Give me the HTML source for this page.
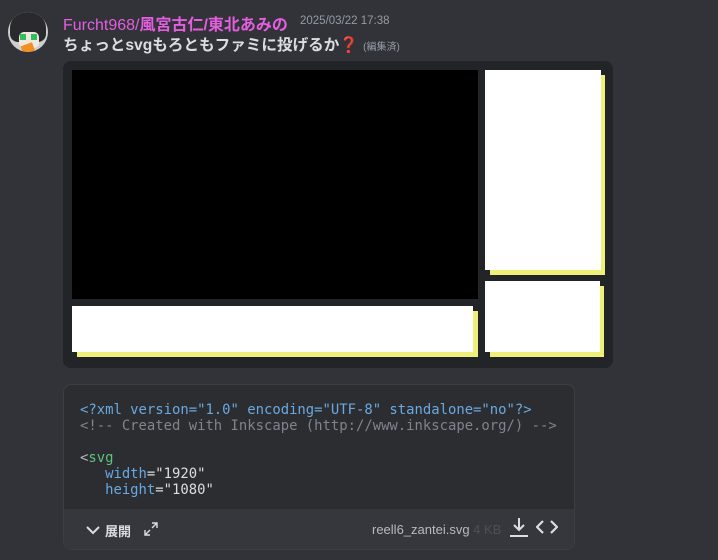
<!DOCTYPE html>
<html><head><meta charset="utf-8"><style>
body{margin:0;width:718px;height:560px;background:#313338;overflow:hidden;position:relative;font-family:"Liberation Sans","Noto Sans CJK JP",sans-serif}
.a{position:absolute}
.mono{font-family:"DejaVu Sans Mono","Liberation Mono",monospace;font-size:13.9px;white-space:pre;line-height:16px}
</style></head><body>
<div class="a" style="left:8px;top:12px;width:40px;height:40px;border-radius:50%;background:#cfcfcf;overflow:hidden">
 <div class="a" style="left:2px;top:0px;width:36px;height:30px;background:#2a2a2e;border-radius:16px 16px 8px 8px"></div>
 <div class="a" style="left:11px;top:20px;width:20px;height:16px;background:#f2e6e0;border-radius:5px"></div>
 <div class="a" style="left:12px;top:22px;width:6px;height:6px;background:#2fc05a"></div>
 <div class="a" style="left:23px;top:22px;width:6px;height:6px;background:#2fc05a"></div>
 <div class="a" style="left:14px;top:32px;width:12px;height:10px;background:#f09020;transform:rotate(-20deg)"></div>
</div>
<div class="a" style="left:63px;top:11px;font-size:16px;color:#e45ee0;white-space:nowrap">Furcht968/<b>風宮古仁/東北あみの</b></div>
<div class="a" style="left:300px;top:15px;font-size:11.5px;color:#949ba4">2025/03/22 17:38</div>
<div class="a" style="left:63px;top:33px;font-size:15.6px;color:#dbdee1;font-weight:bold;white-space:nowrap">ちょっとsvgもろともファミに投げるか<span style="color:#dd2e44">❓</span> <span style="font-size:10px;color:#949ba4;font-weight:normal">(編集済)</span></div>

<div class="a" style="left:63px;top:61px;width:550px;height:307px;background:#232428;border-radius:8px"></div>
<div class="a" style="left:72px;top:70px;width:406px;height:229px;background:#000"></div>
<div class="a" style="left:77px;top:311px;width:401px;height:46px;background:#eef07a"></div>
<div class="a" style="left:72px;top:306px;width:401px;height:46px;background:#fff"></div>
<div class="a" style="left:490px;top:75px;width:115px;height:200px;background:#eef07a"></div>
<div class="a" style="left:485px;top:70px;width:116px;height:200px;background:#fff"></div>
<div class="a" style="left:490px;top:286px;width:114px;height:71px;background:#eef07a"></div>
<div class="a" style="left:485px;top:281px;width:115px;height:71px;background:#fff"></div>

<div class="a" style="left:63px;top:384px;width:510px;height:164px;background:#2b2d31;border:1px solid #3c3e44;border-radius:8px;overflow:hidden">
 <div class="a mono" style="left:16px;top:17px;color:#6aa9e0">&lt;?xml version="1.0" encoding="UTF-8" standalone="no"?&gt;
<span style="color:#80848e">&lt;!-- Created with Inkscape (http://www.inkscape.org/) --&gt;</span>

<span style="color:#b5bac1">&lt;</span><span style="color:#5fc27e">svg</span>
   width<span style="color:#dbdee1">="1920"</span>
   height<span style="color:#dbdee1">="1080"</span></div>
 <div class="a" style="left:0;top:124px;width:510px;height:40px;background:#35373c"></div>
 <svg class="a" style="left:21px;top:140px" width="16" height="10" viewBox="0 0 16 10"><path d="M2 2l6 6 6-6" stroke="#dbdee1" stroke-width="2" fill="none"/></svg>
 <div class="a" style="left:41px;top:136px;font-size:13px;color:#dbdee1;font-weight:bold">展開</div>
 <svg class="a" style="left:80px;top:137px" width="14" height="14" viewBox="0 0 14 14"><path d="M8 1h5v5M13 1L8 6M6 13H1V8M1 13l5-5" stroke="#dbdee1" stroke-width="1.4" fill="none"/></svg>
 <div class="a" style="left:308px;top:137px;font-size:13px;color:#b5bac1">reell6_zantei.svg <span style="color:#4e5058">4 KB</span></div>
 <svg class="a" style="left:445px;top:132px" width="20" height="20" viewBox="0 0 20 20"><path d="M10 1v12M5 8l5 5 5-5M1 19h18" stroke="#dbdee1" stroke-width="2" fill="none"/></svg>
 <svg class="a" style="left:472px;top:134px" width="22" height="16" viewBox="0 0 22 16"><path d="M7 2L1 8l6 6M15 2l6 6-6 6" stroke="#dbdee1" stroke-width="2.2" fill="none"/></svg>
</div>
</body></html>
